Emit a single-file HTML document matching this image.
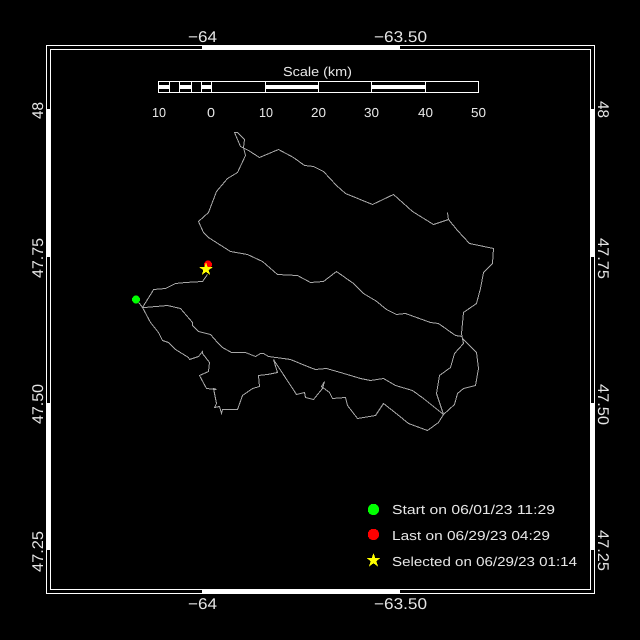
<!DOCTYPE html>
<html>
<head>
<meta charset="utf-8">
<title>Track map</title>
<style>
html,body{margin:0;padding:0;background:#000;width:640px;height:640px;overflow:hidden}
svg{display:block}
text{font-family:"Liberation Sans",sans-serif;fill:#e6e6e6;text-rendering:geometricPrecision}
.a{font-size:15.5px}
.s{font-size:13px}
</style>
</head>
<body>
<svg width="640" height="640" viewBox="0 0 640 640" xmlns="http://www.w3.org/2000/svg">
<rect width="640" height="640" fill="#000"/>
<g fill="#fff" shape-rendering="crispEdges">
<!-- outer frame -->
<rect x="46" y="45" width="549" height="1"/>
<rect x="46" y="593" width="549" height="1"/>
<rect x="46" y="45" width="1" height="549"/>
<rect x="594" y="45" width="1" height="549"/>
<!-- inner frame -->
<rect x="50" y="49" width="541" height="1"/>
<rect x="50" y="589" width="541" height="1"/>
<rect x="50" y="49" width="1" height="541"/>
<rect x="590" y="49" width="1" height="541"/>
<!-- thick ticks -->
<rect x="202" y="45" width="198" height="5"/>
<rect x="202" y="589" width="198" height="5"/>
<rect x="46" y="109" width="5" height="148"/>
<rect x="46" y="403" width="5" height="147"/>
<rect x="590" y="109" width="5" height="148"/>
<rect x="590" y="403" width="5" height="147"/>
<!-- scale bar -->
<rect x="158" y="81" width="321" height="1"/>
<rect x="158" y="92" width="321" height="1"/>
<rect x="158" y="81" width="1" height="12"/>
<rect x="169" y="81" width="1" height="12"/>
<rect x="179" y="81" width="1" height="12"/>
<rect x="191" y="81" width="1" height="12"/>
<rect x="201" y="81" width="1" height="12"/>
<rect x="211" y="81" width="1" height="12"/>
<rect x="265" y="81" width="1" height="12"/>
<rect x="318" y="81" width="1" height="12"/>
<rect x="371" y="81" width="1" height="12"/>
<rect x="425" y="81" width="1" height="12"/>
<rect x="478" y="81" width="1" height="12"/>
<rect x="158" y="85" width="11" height="4"/>
<rect x="179" y="85" width="12" height="4"/>
<rect x="201" y="85" width="10" height="4"/>
<rect x="265" y="85" width="53" height="4"/>
<rect x="371" y="85" width="54" height="4"/>
</g>

<!-- axis labels -->
<text class="a" x="188" y="42" textLength="29" lengthAdjust="spacingAndGlyphs">−64</text>
<text class="a" x="374" y="42" textLength="53" lengthAdjust="spacingAndGlyphs">−63.50</text>
<text class="a" x="188" y="609" textLength="29" lengthAdjust="spacingAndGlyphs">−64</text>
<text class="a" x="374" y="609" textLength="53" lengthAdjust="spacingAndGlyphs">−63.50</text>

<text class="a" transform="translate(43,119) rotate(-90)" textLength="17" lengthAdjust="spacingAndGlyphs">48</text>
<text class="a" transform="translate(43,278) rotate(-90)" textLength="40" lengthAdjust="spacingAndGlyphs">47.75</text>
<text class="a" transform="translate(43,424) rotate(-90)" textLength="40" lengthAdjust="spacingAndGlyphs">47.50</text>
<text class="a" transform="translate(43,572) rotate(-90)" textLength="41" lengthAdjust="spacingAndGlyphs">47.25</text>

<text class="a" transform="translate(598,101) rotate(90)" textLength="17" lengthAdjust="spacingAndGlyphs">48</text>
<text class="a" transform="translate(598,238) rotate(90)" textLength="41" lengthAdjust="spacingAndGlyphs">47.75</text>
<text class="a" transform="translate(598,384) rotate(90)" textLength="41" lengthAdjust="spacingAndGlyphs">47.50</text>
<text class="a" transform="translate(598,530) rotate(90)" textLength="41" lengthAdjust="spacingAndGlyphs">47.25</text>

<!-- scale labels -->
<text class="s" x="283" y="76" textLength="69" lengthAdjust="spacingAndGlyphs">Scale (km)</text>
<text class="s" x="152" y="117" textLength="14" lengthAdjust="spacingAndGlyphs">10</text>
<text class="s" x="207" y="117" textLength="8" lengthAdjust="spacingAndGlyphs">0</text>
<text class="s" x="259" y="117" textLength="14" lengthAdjust="spacingAndGlyphs">10</text>
<text class="s" x="311" y="117" textLength="15" lengthAdjust="spacingAndGlyphs">20</text>
<text class="s" x="364" y="117" textLength="15" lengthAdjust="spacingAndGlyphs">30</text>
<text class="s" x="418" y="117" textLength="15" lengthAdjust="spacingAndGlyphs">40</text>
<text class="s" x="471" y="117" textLength="15" lengthAdjust="spacingAndGlyphs">50</text>

<!-- track -->
<g fill="none" stroke="#a8a8a8" stroke-width="1" shape-rendering="crispEdges" transform="translate(.5,.5)">
<path d="M136 299L142 307L152 291L153 289L165 288L175 283L185 282L202 281L207 274"/>
<path d="M142 307L144 307L167 305L180 308L192 322L192 325L198 331L210 334L217 342L222 347L231 352L245 352L255 356L260 353L263 353L268 356L283 358L290 359L307 366L315 369L326 368L340 372L360 378L370 380L383 378L395 385L412 390L423 398L443 414"/>
<path d="M142 307L150 322L158 332L162 340L168 342L175 349L188 357L189 359L198 356L202 351L202 353L209 362L208 371L199 375L206 388L216 389L213 388L216 403L214 407L219 406L221 413L222 409L237 409L242 395L252 388L259 386L258 375L267 374L277 372L273 359L296 394L304 392L305 397L313 399L322 388L324 381L321 386L329 392L332 398L345 397L347 405L357 418L375 415L383 403L397 414L408 423L427 430L438 422L443 414L454 404L457 393L463 388L475 385L478 368L476 352L462 338L463 343L454 353L450 367L439 375L436 393L443 414"/>
<path d="M462 336L455 335L438 323L430 322L405 313L396 314L386 309L375 300L373 299L363 293L353 283L336 271L323 281L310 282L297 275L277 274L262 261L247 254L230 251L208 237L203 232L198 221L208 212L216 191L227 178L237 172L245 155L243 147L244 139L237 132L234 132L240 146L248 150L259 157L278 149L293 157L304 165L313 166L323 171L336 185L345 193L372 204L393 194L412 211L433 224L448 219L447 212L448 219L457 230L469 243L493 248L492 263L483 272L480 288L476 303L463 312L461 333L462 338"/>
</g>

<!-- map markers -->
<g shape-rendering="crispEdges">
<circle cx="136" cy="299.5" r="4" fill="#0f0"/>
<circle cx="208" cy="264.5" r="4" fill="#f00"/>
<polygon fill="#ff0" points="206,263 207.6,268 213,268 208.7,271.1 210.3,276 206,273 201.7,276 203.3,271.1 199,268 204.4,268" transform="translate(0,-1)"/>
</g>

<!-- legend -->
<g shape-rendering="crispEdges">
<circle cx="373.5" cy="509.5" r="5.7" fill="#0f0"/>
<circle cx="373.5" cy="534.5" r="5.7" fill="#f00"/>
<polygon fill="#ff0" points="373.5,553 375.2,558 380.5,558 376.3,561.2 378,566.5 373.5,563.3 369,566.5 370.7,561.2 366.5,558 371.8,558"/>
</g>
<text class="s" x="392" y="514" textLength="163" lengthAdjust="spacingAndGlyphs">Start on 06/01/23 11:29</text>
<text class="s" x="392" y="540" textLength="158" lengthAdjust="spacingAndGlyphs">Last on 06/29/23 04:29</text>
<text class="s" x="392" y="566" textLength="185" lengthAdjust="spacingAndGlyphs">Selected on 06/29/23 01:14</text>
</svg>
</body>
</html>
